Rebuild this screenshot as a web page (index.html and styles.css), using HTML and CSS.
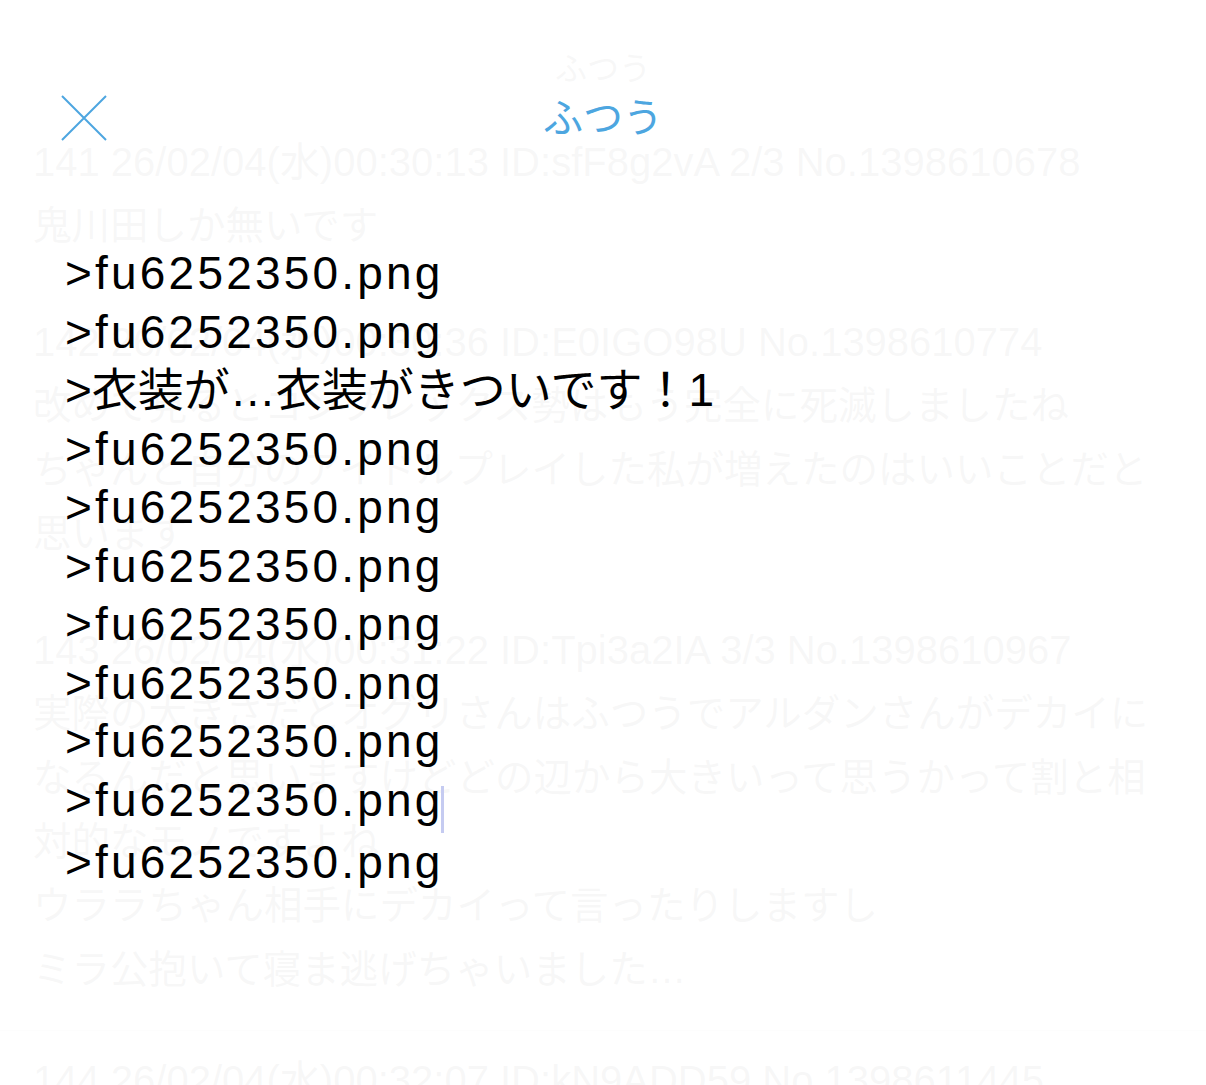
FILE: index.html
```html
<!DOCTYPE html>
<html lang="ja">
<head>
<meta charset="utf-8">
<title>ふつう</title>
<link rel="stylesheet" href="styles.css">
</head>
<body>
<div id="thread">
  <div class="nav">ふつう</div>
  <div class="res">
    <div class="head">141 26/02/04(水)00:30:13 ID:sfF8g2vA 2/3 No.1398610678</div>
    <div class="body">鬼川田しか無いです</div>
  </div>
  <div class="res">
    <div class="head">142 26/02/04(水)00:30:36 ID:E0IGO98U No.1398610774</div>
    <div class="body">改めて見るとコンプレックス勢はもう完全に死滅しましたね<br>ちゃんと自分のアイドルプレイした私が増えたのはいいことだと<br>思います</div>
  </div>
  <div class="res">
    <div class="head">143 26/02/04(水)00:31:22 ID:Tpi3a2IA 3/3 No.1398610967</div>
    <div class="body">実際の大きさだとオグリさんはふつうでアルダンさんがデカイに<br>なるんだと思いますけどどの辺から大きいって思うかって割と相<br>対的なモノですよね<br>ウララちゃん相手にデカイって言ったりしますし<br>ミラ公抱いて寝ま逃げちゃいました…</div>
  </div>
  <div class="res last">
    <div class="head">144 26/02/04(水)00:32:07 ID:kN9ADD59 No.1398611445</div>
  </div>
</div>

<div id="editor">
  <div class="bar">
    <div class="close">
      <svg width="46" height="46" viewBox="0 0 46 46"><path d="M1 1L45 45M45 1L1 45" stroke="#4da6e0" stroke-width="2" fill="none"/></svg>
    </div>
    <div class="title">ふつう</div>
    <div></div>
  </div>
  <div class="text">
    <div class="ln">&gt;fu6252350.png</div>
    <div class="ln">&gt;fu6252350.png</div>
    <div class="ln jp">&gt;衣装が…衣装がきついです！1</div>
    <div class="ln">&gt;fu6252350.png</div>
    <div class="ln">&gt;fu6252350.png</div>
    <div class="ln">&gt;fu6252350.png</div>
    <div class="ln">&gt;fu6252350.png</div>
    <div class="ln">&gt;fu6252350.png</div>
    <div class="ln">&gt;fu6252350.png</div>
    <div class="ln">&gt;fu6252350.png<span class="caret"></span></div>
    <div class="ln">&gt;fu6252350.png</div>
  </div>
</div>
</body>
</html>
```

FILE: styles.css
```css
body { margin: 0; width: 1206px; height: 1085px; overflow: hidden; position: relative; background: #fff; font-family: "Liberation Sans", "Noto Sans CJK JP", sans-serif; }

/* thread behind the editor */
#thread { color: #222; }
.nav { text-align: center; font-size: 32px; line-height: 40px; padding-top: 49px; height: 81px; }
.res { padding-left: 33px; margin-bottom: 52px; }
.head { font-size: 40px; line-height: 64px; white-space: nowrap; }
.body { font-size: 38.5px; line-height: 64px; white-space: nowrap; }
.res.last { margin: 0; padding-top: 17px; border-top: 1px solid #ccc; }
.res:nth-child(4) { margin-bottom: 28px; }

/* editor sheet */
#editor { position: absolute; top: 0; left: 0; right: 0; bottom: 0; background: rgba(255,255,255,0.965); }
.bar { display: grid; grid-template-columns: 1fr auto 1fr; align-items: center; padding-top: 95px; height: 46px; }
.close { padding-left: 61px; height: 46px; }
.title { font-size: 40px; line-height: 46px; margin-top: -6px; color: #4da6e0; font-family: "Noto Sans CJK JP", sans-serif; }
.text { padding: 103px 0 0 65px; font-size: 46px; line-height: 58.5px; letter-spacing: 3.2px; color: #000; white-space: nowrap; }
.ln.jp { letter-spacing: 0; }
.caret { display: inline-block; width: 3px; height: 47px; background: #c5cbf1; vertical-align: -17px; margin-left: -3px; }
```
